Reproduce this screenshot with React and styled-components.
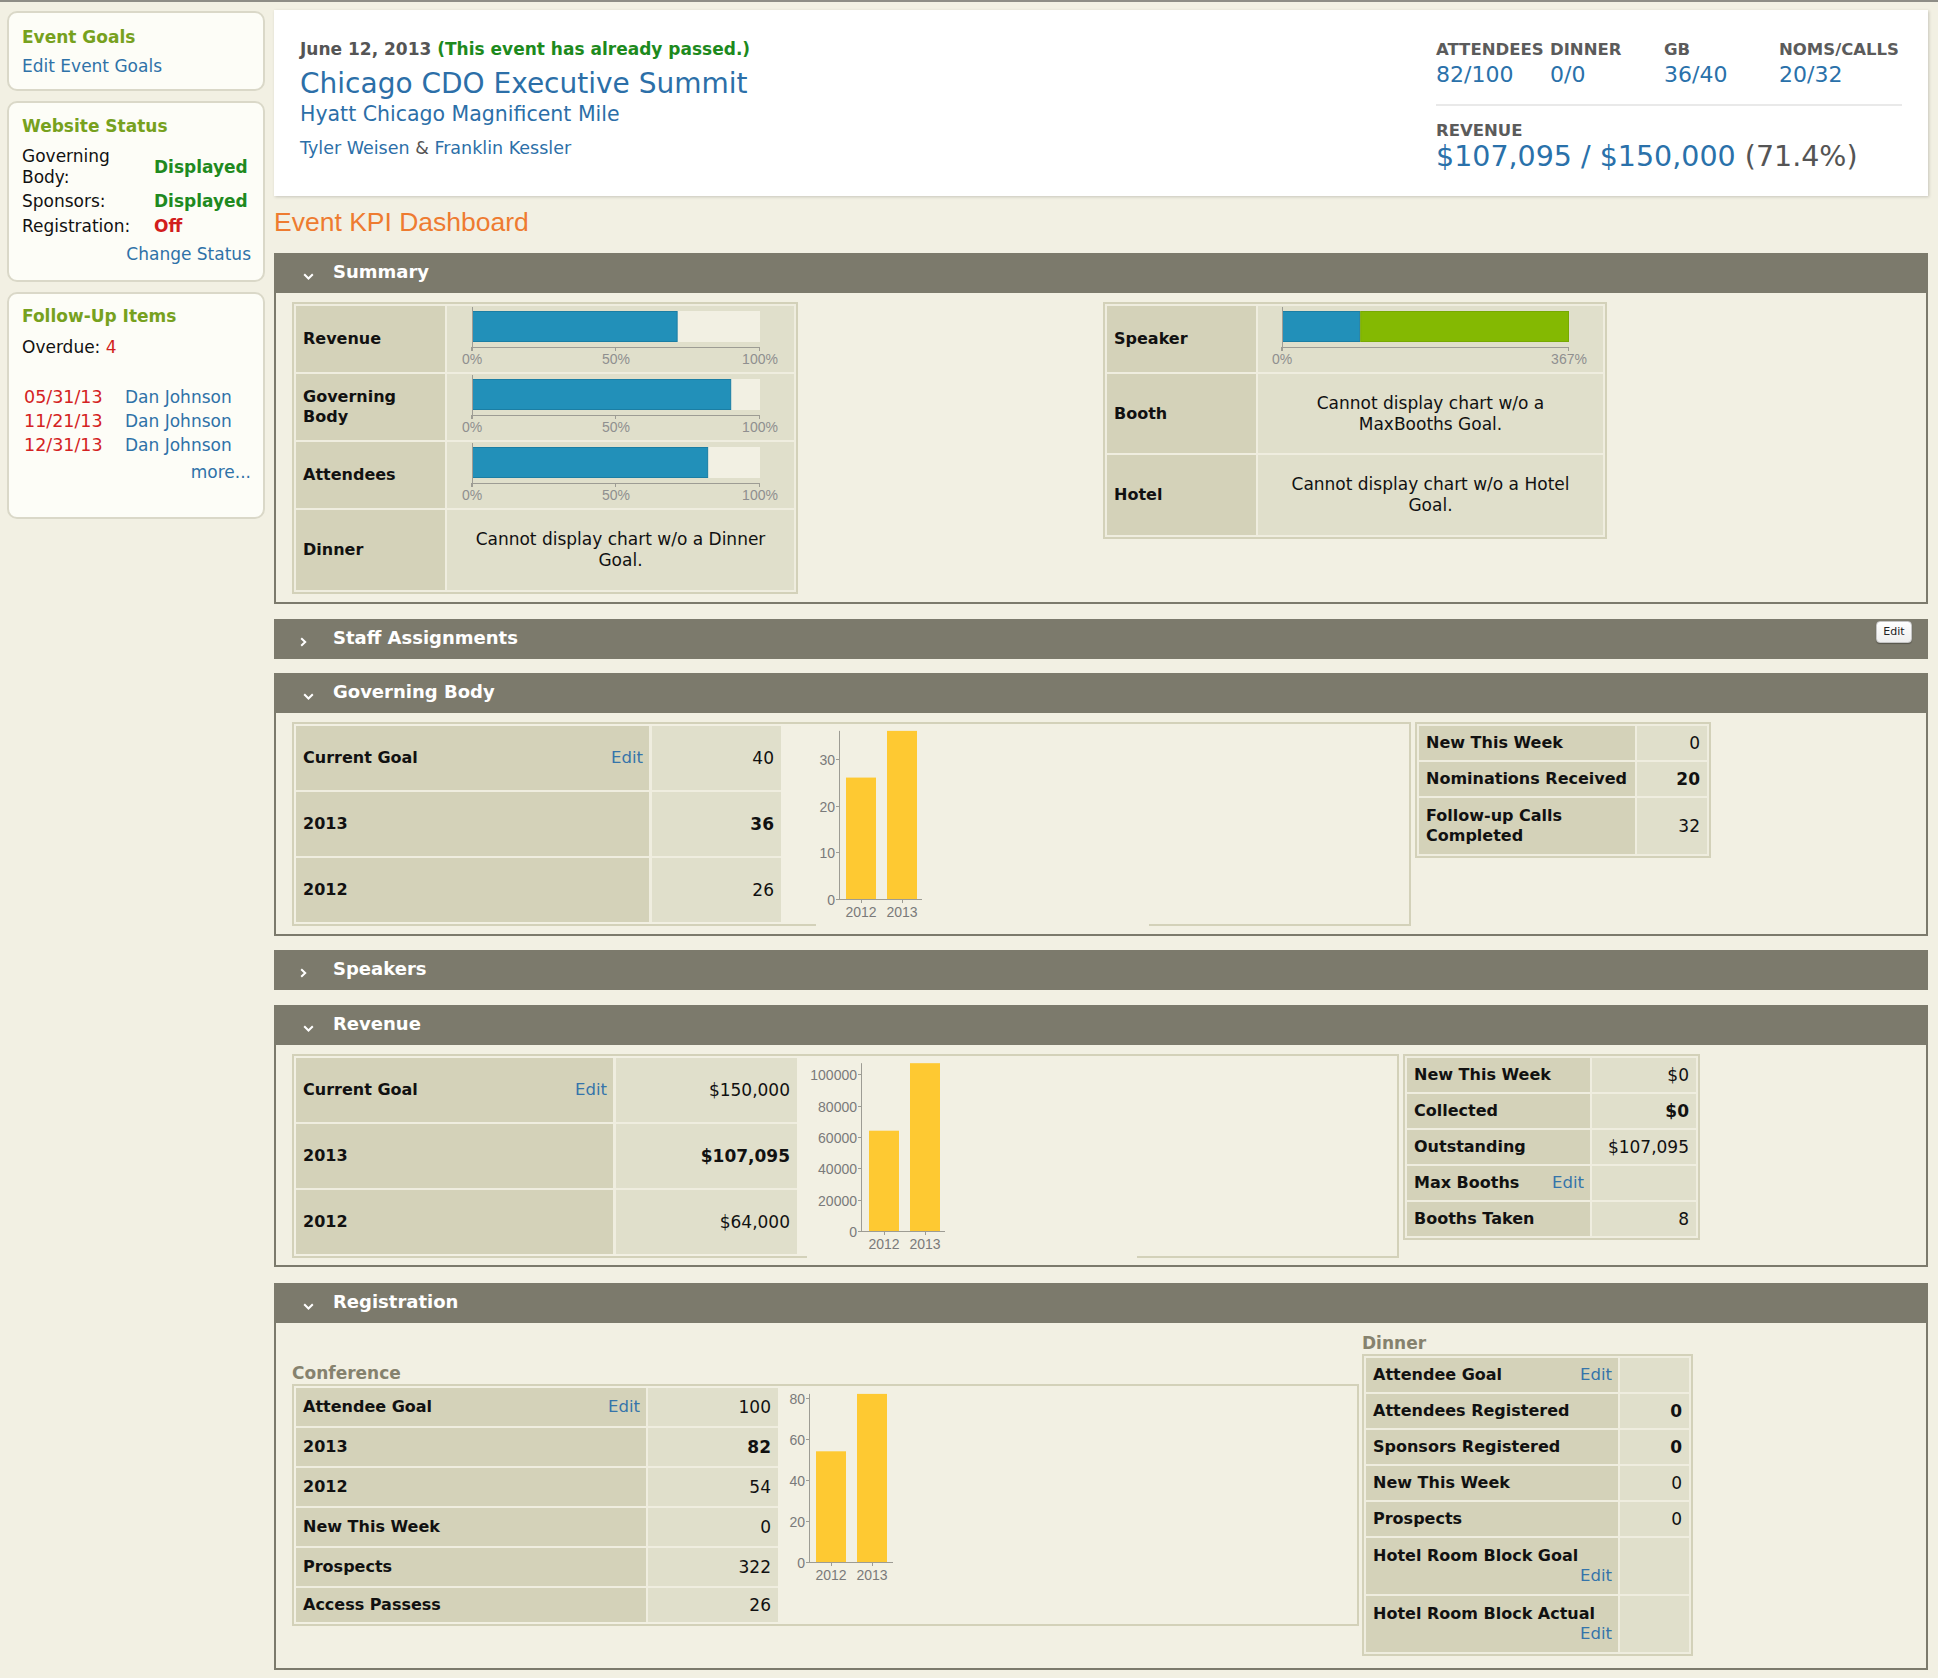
import React from 'react'
import styled, { createGlobalStyle } from 'styled-components'

const GlobalStyle = createGlobalStyle`
  *, *::before, *::after { box-sizing: border-box; }
  html, body { margin: 0; padding: 0; }
  body {
    background: #f2f0e3;
    border-top: 2px solid #8e8d86;
    font-family: "DejaVu Sans", Verdana, sans-serif;
    font-size: 16px;
    color: #111;
  }
`

const Page = styled.div`
  display: flex;
  align-items: flex-start;
  gap: 9px;
  padding: 8px 10px 10px 7px;
`

/* ---------- sidebar ---------- */

const Sidebar = styled.aside`
  width: 258px;
  flex: 0 0 258px;
  margin-top: 1px;
  display: flex;
  flex-direction: column;
  gap: 10px;
  font-size: 17px;
`

const SideBox = styled.div`
  background: #fdfdf7;
  border: 2px solid #dad8c8;
  border-radius: 10px;
  padding: ${p => p.$pad};
`

const SideTitle = styled.div`
  font-weight: bold;
  font-size: 17px;
  line-height: 22px;
  color: #77a11e;
`

const SideLink = styled.a`
  display: block;
  color: #2f72a8;
  line-height: 20px;
  text-decoration: none;
  margin-top: ${p => p.$mt || 0}px;
  text-align: ${p => p.$right ? 'right' : 'left'};
`

const StatusGrid = styled.div`
  display: grid;
  grid-template-columns: 132px 1fr;
  grid-auto-rows: minmax(24px, auto);
  row-gap: 1px;
  align-items: center;
  margin-top: 9px;
  line-height: 21px;
`

const StatusValue = styled.span`
  font-weight: bold;
  color: ${p => p.$off ? '#d21d1d' : '#1f8a1f'};
`

const Overdue = styled.div`
  margin-top: 10px;
  line-height: 20px;
  span { color: #d21d1d; }
`

const FollowList = styled.div`
  display: grid;
  grid-template-columns: 101px 1fr;
  margin-top: 28px;
  padding-left: 2px;
  line-height: 24px;
`

const FollowDate = styled.span`
  color: #d42222;
  font-size: 17.5px;
`

const FollowName = styled.a`
  color: #2f72a8;
  text-decoration: none;
`

/* ---------- header ---------- */

const Main = styled.main`
  flex: 1;
  min-width: 0;
`

const HeaderCard = styled.header`
  height: 186px;
  background: #fff;
  box-shadow: 1px 1px 3px rgba(0, 0, 0, 0.18);
  display: flex;
  justify-content: space-between;
  padding: 28px 26px 0 26px;
`

const DateLine = styled.div`
  font-weight: bold;
  font-size: 17px;
  line-height: 22px;
  color: #555;
  span { color: #1d8a1d; }
`

const EventTitle = styled.div`
  font-size: 28px;
  line-height: 34px;
  margin-top: 7px;
  color: #2c6fa8;
`

const Venue = styled.div`
  font-size: 20.5px;
  line-height: 26px;
  color: #2c6fa8;
`

const Hosts = styled.div`
  font-size: 17.5px;
  line-height: 22px;
  margin-top: 10px;
  color: #555;
  a { color: #2c6fa8; text-decoration: none; }
`

const Stats = styled.div`
  width: 466px;
  margin-top: 2px;
`

const StatsRow = styled.div`
  display: grid;
  grid-template-columns: 114px 114px 115px auto;
`

const StatLabel = styled.div`
  font-weight: bold;
  font-size: 16.5px;
  line-height: 20px;
  color: #5b5b5b;
  white-space: nowrap;
`

const StatValue = styled.div`
  font-size: 22px;
  line-height: 26px;
  margin-top: 2px;
  color: #2a71aa;
`

const StatDivider = styled.div`
  height: 2px;
  background: #e9e9e9;
  margin-top: 16px;
`

const RevenueLabel = styled(StatLabel)`
  margin-top: 15px;
`

const RevenueValue = styled.div`
  font-size: 28.5px;
  line-height: 32px;
  color: #2a71aa;
  white-space: nowrap;
  span { color: #555; }
`

const DashTitle = styled.h1`
  margin: 11px 0 16px;
  font: normal 26.5px/30px "Liberation Sans", Arial, sans-serif;
  color: #ee7b30;
`

/* ---------- sections ---------- */

const SectionWrap = styled.section`
  margin-top: ${p => p.$gap}px;
`

const SectionBar = styled.div`
  height: 40px;
  background: #7c7a6c;
  display: flex;
  align-items: center;
  color: #fff;
`

const Chevron = styled.span`
  width: 59px;
  flex: 0 0 59px;
  display: flex;
  padding-left: ${p => p.$open ? 29 : 26}px;
  margin-top: ${p => p.$open ? 7 : 5}px;
`

const SectionTitle = styled.span`
  font-weight: bold;
  font-size: 18px;
  line-height: 22px;
  margin-top: -2px;
`

const BarButton = styled.button`
  margin-left: auto;
  margin-right: 16px;
  align-self: flex-start;
  margin-top: 2px;
  height: 22px;
  width: 36px;
  padding: 0;
  font: 11px/20px "DejaVu Sans", sans-serif;
  color: #222;
  background: linear-gradient(#ffffff, #eeeeee);
  border: 1px solid #c4c4c4;
  border-radius: 4px;
  box-shadow: 0 1px 1px rgba(0, 0, 0, 0.3);
`

const SectionBody = styled.div`
  border: 2px solid #7c7a6c;
  border-top: none;
  background: #f2f0e3;
`

const SummaryBody = styled.div`
  display: grid;
  grid-template-columns: 809px 1fr;
  align-items: start;
  padding: 9px 0 8px 16px;
`

const SplitBody = styled.div`
  display: flex;
  align-items: flex-start;
  gap: 4px;
  padding: 9px 0 ${p => p.$pb}px 16px;
`

const RegBody = styled.div`
  display: flex;
  align-items: center;
  gap: 3px;
  padding: 10px 0 12px 16px;
`

const SubHeading = styled.div`
  font-weight: bold;
  font-size: 17px;
  line-height: 21px;
  color: #86826e;
`

/* ---------- tables ---------- */

const KpiTable = styled.div`
  display: grid;
  width: max-content;
  grid-template-columns: ${p => p.$cols};
  grid-template-rows: ${p => p.$rows};
  row-gap: 2px;
  column-gap: ${p => p.$colGap || 2}px;
  padding: ${p => p.$bare ? 0 : 2}px;
  border: ${p => p.$bare ? 'none' : '2px solid #d3d1b9'};
  background: #efeddf;
  margin-left: ${p => p.$ml || 0}px;
`

const Label = styled.div`
  background: #d4d2b9;
  font-weight: bold;
  display: flex;
  flex-wrap: wrap;
  align-items: center;
  align-content: center;
  column-gap: 8px;
  padding: 0 6px 0 7px;
  line-height: 20px;
  white-space: ${p => p.$wrap ? 'normal' : 'nowrap'};
`

const EditLink = styled.a`
  margin-left: auto;
  color: #3574aa;
  font-weight: normal;
  font-size: 16.5px;
  text-decoration: none;
`

const Value = styled.div`
  background: #e0dfcb;
  display: flex;
  align-items: center;
  justify-content: flex-end;
  padding: 0 7px;
  font-size: 17px;
  font-weight: ${p => p.$bold ? 'bold' : 'normal'};
`

const Message = styled.div`
  background: #e0dfcb;
  display: flex;
  align-items: center;
  justify-content: center;
  text-align: center;
  font-size: 17px;
  line-height: 21px;
  span { max-width: 305px; }
`

const ChartCell = styled.div`
  background: #e0dfcb;
  svg { display: block; }
`

const Block = styled.div`
  display: flex;
  width: ${p => p.$w}px;
  border: 2px solid #d3d1b9;
  ${p => p.$open && 'border-bottom: none;'}
`

const TablePart = styled.div`
  width: ${p => p.$w}px;
  flex: 0 0 ${p => p.$w}px;
  padding: 2px;
  ${p => p.$open && 'border-bottom: 2px solid #d3d1b9;'}
  svg { display: block; }
`

const Filler = styled.div`
  flex: 1;
  display: flex;
  align-items: flex-end;
  justify-content: flex-end;
`

const FillerLine = styled.div`
  width: 260px;
  height: 2px;
  background: #d3d1b9;
`

/* ---------- charts ---------- */

const axisColor = '#9d9c94'
const chartFont = '"Liberation Sans", Arial, sans-serif'

function BulletChart({ width, x0, track, segments, labels }) {
  return (
    <svg width={width} height={66}>
      <rect x={x0} y={5} width={track} height={31} fill="#f2f0e3" />
      {segments.map((s, i) => (
        <rect key={i} x={x0 + s.from * track + 0.5} y={5.5} width={(s.to - s.from) * track - 1} height={30}
          fill={s.color} stroke={s.stroke} />
      ))}
      <line x1={x0 + 0.5} y1={1} x2={x0 + 0.5} y2={45} stroke={axisColor} />
      <line x1={x0} y1={41.5} x2={x0 + track} y2={41.5} stroke={axisColor} />
      {labels.map((l, i) => (
        <g key={i}>
          <line x1={x0 + l.pos * track - 0.5} y1={41} x2={x0 + l.pos * track - 0.5} y2={45} stroke={axisColor} />
          <text x={x0 + l.pos * track} y={58} textAnchor="middle" fontSize="14" fill="#8f8f8f" fontFamily={chartFont}>
            {l.text}
          </text>
        </g>
      ))}
    </svg>
  )
}

function ColumnChart({ width, height, axisX, baseY, scale, max, ticks, bars }) {
  const top = baseY - max * scale
  return (
    <svg width={width} height={height}>
      {bars.map(b => (
        <g key={b.label}>
          <rect x={b.x} y={baseY - b.value * scale} width={30} height={b.value * scale} fill="#fec932" />
          <line x1={b.x + 15.5} y1={baseY} x2={b.x + 15.5} y2={baseY + 4} stroke={axisColor} />
          <text x={b.x + 15} y={baseY + 18} textAnchor="middle" fontSize="14" fill="#7a7a7a" fontFamily={chartFont}>
            {b.label}
          </text>
        </g>
      ))}
      <line x1={axisX + 0.5} y1={top} x2={axisX + 0.5} y2={baseY} stroke={axisColor} />
      <line x1={axisX} y1={baseY + 0.5} x2={axisX + 84} y2={baseY + 0.5} stroke={axisColor} />
      {ticks.map(t => {
        const y = Math.round(baseY - t * scale) + 0.5
        return (
          <g key={t}>
            <line x1={axisX - 3} y1={y} x2={axisX} y2={y} stroke={axisColor} />
            <text x={axisX - 4} y={y + 5} textAnchor="end" fontSize="14" fill="#7a7a7a" fontFamily={chartFont}>
              {t}
            </text>
          </g>
        )
      })}
    </svg>
  )
}

/* ---------- icons ---------- */

const DownIcon = () => (
  <svg width="11" height="7" viewBox="0 0 11 7">
    <polyline points="1.2,1.2 5.5,5.5 9.8,1.2" fill="none" stroke="#fff" strokeWidth="2" />
  </svg>
)

const RightIcon = () => (
  <svg width="7" height="10" viewBox="0 0 7 10">
    <polyline points="1.2,1.2 5.2,5 1.2,8.8" fill="none" stroke="#fff" strokeWidth="2" />
  </svg>
)

function Section({ title, open, gap, action, children }) {
  return (
    <SectionWrap $gap={gap}>
      <SectionBar>
        <Chevron $open={open}>{open ? <DownIcon /> : <RightIcon />}</Chevron>
        <SectionTitle>{title}</SectionTitle>
        {action}
      </SectionBar>
      {open && <SectionBody>{children}</SectionBody>}
    </SectionWrap>
  )
}

/* ---------- data ---------- */

const pctLabels = [
  { pos: 0, text: '0%' },
  { pos: 0.5, text: '50%' },
  { pos: 1, text: '100%' },
]

const blueBar = to => [{ from: 0, to, color: '#2290b9', stroke: '#1b7ea4' }]

const cell = (row, i) => (
  <React.Fragment key={i}>
    <Label $wrap={row.wrap}>
      {row.label}
      {row.edit && <EditLink href="#">Edit</EditLink>}
    </Label>
    <Value $bold={row.bold}>{row.value}</Value>
  </React.Fragment>
)

const gbRows = [
  { label: 'Current Goal', edit: true, value: '40' },
  { label: '2013', value: '36', bold: true },
  { label: '2012', value: '26' },
]

const gbSide = [
  { label: 'New This Week', value: '0' },
  { label: 'Nominations Received', value: '20', bold: true },
  { label: 'Follow-up Calls Completed', value: '32', wrap: true },
]

const revRows = [
  { label: 'Current Goal', edit: true, value: '$150,000' },
  { label: '2013', value: '$107,095', bold: true },
  { label: '2012', value: '$64,000' },
]

const revSide = [
  { label: 'New This Week', value: '$0' },
  { label: 'Collected', value: '$0', bold: true },
  { label: 'Outstanding', value: '$107,095' },
  { label: 'Max Booths', edit: true, value: '' },
  { label: 'Booths Taken', value: '8' },
]

const confRows = [
  { label: 'Attendee Goal', edit: true, value: '100' },
  { label: '2013', value: '82', bold: true },
  { label: '2012', value: '54' },
  { label: 'New This Week', value: '0' },
  { label: 'Prospects', value: '322' },
  { label: 'Access Passess', value: '26' },
]

const dinnerRows = [
  { label: 'Attendee Goal', edit: true, value: '' },
  { label: 'Attendees Registered', value: '0', bold: true },
  { label: 'Sponsors Registered', value: '0', bold: true },
  { label: 'New This Week', value: '0' },
  { label: 'Prospects', value: '0' },
  { label: 'Hotel Room Block Goal', edit: true, value: '' },
  { label: 'Hotel Room Block Actual', edit: true, value: '' },
]

const followUps = [
  ['05/31/13', 'Dan Johnson'],
  ['11/21/13', 'Dan Johnson'],
  ['12/31/13', 'Dan Johnson'],
]

export default function App() {
  return (
    <>
      <GlobalStyle />
      <Page>
        <Sidebar>
          <SideBox $pad="13px 12px 13px 13px">
            <SideTitle>Event Goals</SideTitle>
            <SideLink href="#" $mt={8}>Edit Event Goals</SideLink>
          </SideBox>

          <SideBox $pad="12px 12px 16px 13px">
            <SideTitle>Website Status</SideTitle>
            <StatusGrid>
              <span>Governing Body:</span>
              <StatusValue>Displayed</StatusValue>
              <span>Sponsors:</span>
              <StatusValue>Displayed</StatusValue>
              <span>Registration:</span>
              <StatusValue $off>Off</StatusValue>
            </StatusGrid>
            <SideLink href="#" $mt={6} $right>Change Status</SideLink>
          </SideBox>

          <SideBox $pad="11px 12px 35px 13px">
            <SideTitle>Follow-Up Items</SideTitle>
            <Overdue>Overdue: <span>4</span></Overdue>
            <FollowList>
              {followUps.map(([d, n], i) => (
                <React.Fragment key={i}>
                  <FollowDate>{d}</FollowDate>
                  <FollowName href="#">{n}</FollowName>
                </React.Fragment>
              ))}
            </FollowList>
            <SideLink href="#" $mt={5} $right>more...</SideLink>
          </SideBox>
        </Sidebar>

        <Main>
          <HeaderCard>
            <div>
              <DateLine>June 12, 2013 <span>(This event has already passed.)</span></DateLine>
              <EventTitle>Chicago CDO Executive Summit</EventTitle>
              <Venue>Hyatt Chicago Magnificent Mile</Venue>
              <Hosts><a href="#">Tyler Weisen</a> &amp; <a href="#">Franklin Kessler</a></Hosts>
            </div>
            <Stats>
              <StatsRow>
                <div><StatLabel>ATTENDEES</StatLabel><StatValue>82/100</StatValue></div>
                <div><StatLabel>DINNER</StatLabel><StatValue>0/0</StatValue></div>
                <div><StatLabel>GB</StatLabel><StatValue>36/40</StatValue></div>
                <div><StatLabel>NOMS/CALLS</StatLabel><StatValue>20/32</StatValue></div>
              </StatsRow>
              <StatDivider />
              <RevenueLabel>REVENUE</RevenueLabel>
              <RevenueValue>$107,095 / $150,000 <span>(71.4%)</span></RevenueValue>
            </Stats>
          </HeaderCard>

          <DashTitle>Event KPI Dashboard</DashTitle>

          <Section title="Summary" open gap={0}>
            <SummaryBody>
              <KpiTable $cols="149px 347px" $rows="66px 66px 66px 80px">
                <Label>Revenue</Label>
                <ChartCell><BulletChart width={347} x0={25} track={288} segments={blueBar(0.714)} labels={pctLabels} /></ChartCell>
                <Label $wrap>Governing Body</Label>
                <ChartCell><BulletChart width={347} x0={25} track={288} segments={blueBar(0.9)} labels={pctLabels} /></ChartCell>
                <Label>Attendees</Label>
                <ChartCell><BulletChart width={347} x0={25} track={288} segments={blueBar(0.82)} labels={pctLabels} /></ChartCell>
                <Label>Dinner</Label>
                <Message><span>Cannot display chart w/o a Dinner Goal.</span></Message>
              </KpiTable>

              <KpiTable $cols="149px 345px" $rows="66px 79px 80px" $ml={2}>
                <Label>Speaker</Label>
                <ChartCell>
                  <BulletChart width={345} x0={24} track={287}
                    segments={[
                      { from: 0, to: 1 / 3.67, color: '#2290b9', stroke: '#1b7ea4' },
                      { from: 1 / 3.67, to: 1, color: '#84b902', stroke: '#77a903' },
                    ]}
                    labels={[{ pos: 0, text: '0%' }, { pos: 1, text: '367%' }]} />
                </ChartCell>
                <Label>Booth</Label>
                <Message><span>Cannot display chart w/o a MaxBooths Goal.</span></Message>
                <Label>Hotel</Label>
                <Message><span>Cannot display chart w/o a Hotel Goal.</span></Message>
              </KpiTable>
            </SummaryBody>
          </Section>

          <Section title="Staff Assignments" gap={15} action={<BarButton>Edit</BarButton>} />

          <Section title="Governing Body" open gap={14}>
            <SplitBody $pb={8}>
              <Block $w={1119} $open>
                <TablePart $w={522} $open>
                  <KpiTable $bare $cols="353px 129px" $rows="64px 64px 64px" $colGap={3}>
                    {gbRows.map(cell)}
                  </KpiTable>
                </TablePart>
                <ColumnChart width={106} height={200} axisX={23} baseY={175} scale={4.67} max={36}
                  ticks={[0, 10, 20, 30]}
                  bars={[{ label: '2012', value: 26, x: 30 }, { label: '2013', value: 36, x: 71 }]} />
                <Filler><FillerLine /></Filler>
              </Block>
              <KpiTable $cols="216px 70px" $rows="34px 34px 56px">
                {gbSide.map(cell)}
              </KpiTable>
            </SplitBody>
          </Section>

          <Section title="Speakers" gap={14} />

          <Section title="Revenue" open gap={15}>
            <SplitBody $pb={7}>
              <Block $w={1107} $open>
                <TablePart $w={513} $open>
                  <KpiTable $bare $cols="317px 181px" $rows="64px 64px 64px" $colGap={3}>
                    {revRows.map(cell)}
                  </KpiTable>
                </TablePart>
                <ColumnChart width={145} height={200} axisX={54} baseY={175} scale={0.001567} max={107095}
                  ticks={[0, 20000, 40000, 60000, 80000, 100000]}
                  bars={[{ label: '2012', value: 64000, x: 62 }, { label: '2013', value: 107095, x: 103 }]} />
                <Filler><FillerLine /></Filler>
              </Block>
              <KpiTable $cols="183px 104px" $rows="34px 34px 34px 34px 34px">
                {revSide.map(cell)}
              </KpiTable>
            </SplitBody>
          </Section>

          <Section title="Registration" open gap={16}>
            <RegBody>
              <div>
                <SubHeading>Conference</SubHeading>
                <Block $w={1067}>
                  <TablePart $w={492}>
                    <KpiTable $bare $cols="350px 130px" $rows="38px 38px 38px 38px 38px 34px">
                      {confRows.map(cell)}
                    </KpiTable>
                  </TablePart>
                  <ColumnChart width={110} height={238} axisX={23} baseY={176} scale={2.05} max={82}
                    ticks={[0, 20, 40, 60, 80]}
                    bars={[{ label: '2012', value: 54, x: 30 }, { label: '2013', value: 82, x: 71 }]} />
                  <Filler />
                </Block>
              </div>
              <div>
                <SubHeading>Dinner</SubHeading>
                <KpiTable $cols="252px 69px" $rows="34px 34px 34px 34px 34px 56px 56px">
                  {dinnerRows.map(cell)}
                </KpiTable>
              </div>
            </RegBody>
          </Section>
        </Main>
      </Page>
    </>
  )
}
